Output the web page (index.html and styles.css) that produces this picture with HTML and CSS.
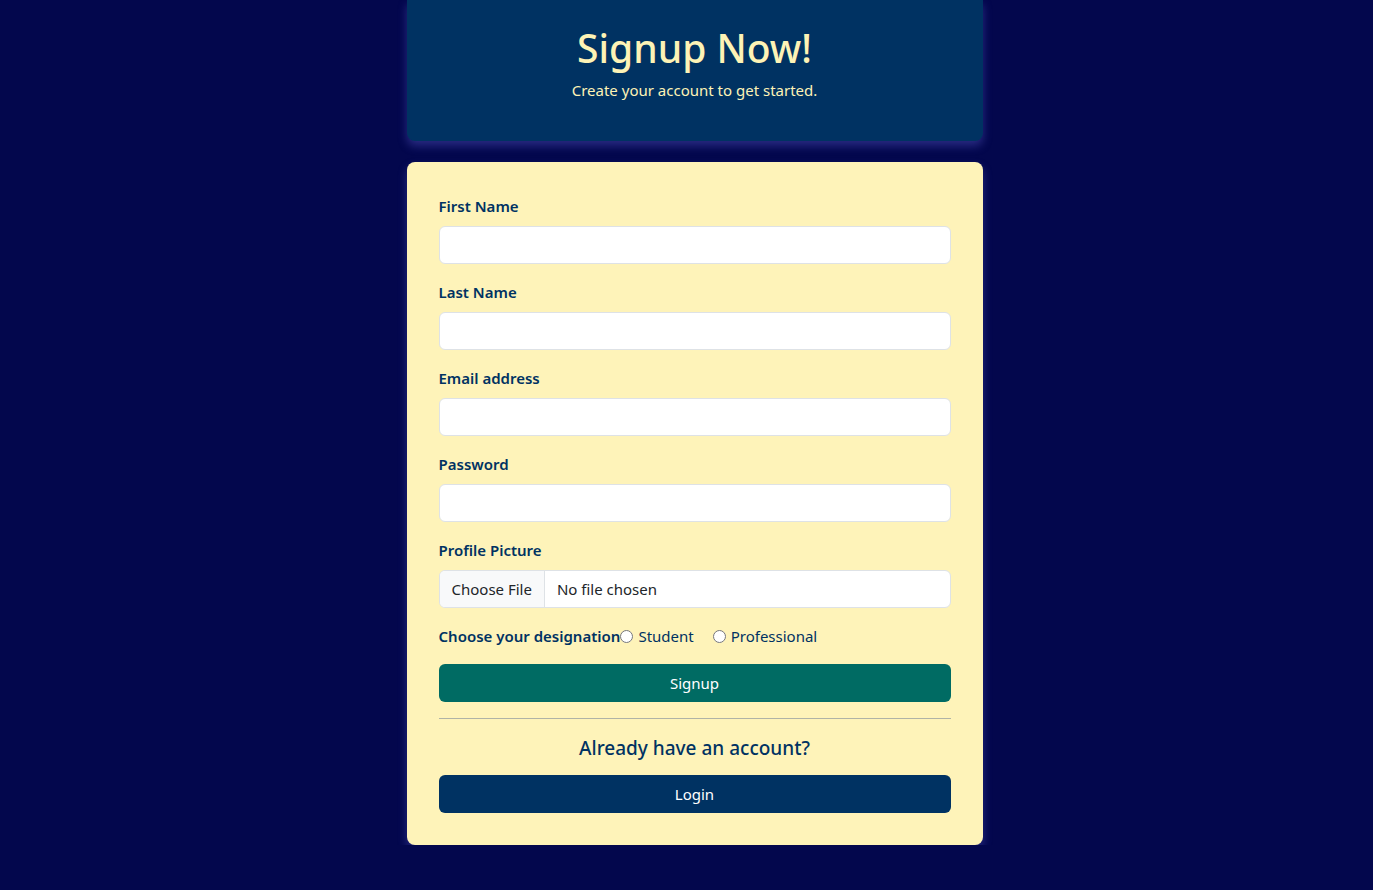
FILE: index.html
```html
<!DOCTYPE html>
<html lang="en">
<head>
<meta charset="utf-8">
<title>Signup</title>
<link rel="stylesheet" href="styles.css">
</head>
<body>
<main class="wrap">
  <header class="hero">
    <h1 class="hero-title">Signup Now!</h1>
    <p class="hero-sub">Create your account to get started.</p>
  </header>
  <form class="card">
    <div class="group">
      <label class="label" for="fn">First Name</label>
      <input class="input" id="fn" type="text">
    </div>
    <div class="group">
      <label class="label" for="ln">Last Name</label>
      <input class="input" id="ln" type="text">
    </div>
    <div class="group">
      <label class="label" for="em">Email address</label>
      <input class="input" id="em" type="email">
    </div>
    <div class="group">
      <label class="label" for="pw">Password</label>
      <input class="input" id="pw" type="password">
    </div>
    <div class="group">
      <label class="label" for="pp">Profile Picture</label>
      <div class="file">
        <span class="file-btn">Choose File</span>
        <span class="file-name">No file chosen</span>
      </div>
    </div>
    <div class="desig">
      <span class="label inline">Choose your designation</span>
      <label class="radio"><input type="radio" name="d"><span>Student</span></label>
      <label class="radio"><input type="radio" name="d"><span>Professional</span></label>
    </div>
    <button type="button" class="btn btn-signup">Signup</button>
    <hr class="rule">
    <h5 class="already">Already have an account?</h5>
    <button type="button" class="btn btn-login">Login</button>
  </form>
</main>
</body>
</html>
```

FILE: styles.css
```css
* { box-sizing: border-box; }
html, body { margin: 0; padding: 0; }
body {
  background: #03074d;
  font-family: "Noto Sans", "Open Sans", sans-serif;
  color: #003262;
  font-size: 16px;
  line-height: 1.5;
  padding-left: 16px;
}
.wrap {
  width: 576px;
  margin: 0 auto;
  display: flex;
  flex-direction: column;
  gap: 21px;
}
.hero {
  background: #003262;
  border-radius: 0 0 8px 8px;
  height: 141px;
  padding-top: 24px;
  text-align: center;
  color: #fdf3b6;
  box-shadow: 0 5px 10px rgba(110, 110, 230, 0.35);
}
.hero-title {
  margin: 0;
  font-size: 39px;
  font-weight: 500;
  line-height: 48px;
}
.hero-sub {
  margin: 6px 0 0;
  font-size: 15px;
  line-height: 24px;
}
.card {
  background: #fef3b9;
  border-radius: 8px;
  padding: 32px;
  display: flex;
  flex-direction: column;
  box-shadow: 0 5px 10px rgba(110, 110, 230, 0.35);
}
.group {
  display: flex;
  flex-direction: column;
  margin-bottom: 16px;
}
.label {
  font-weight: 600;
  font-size: 15px;
  line-height: 24px;
  margin-bottom: 8px;
  color: #003262;
}
.label.inline { margin-bottom: 0; }
.input {
  height: 38px;
  border: 1px solid #dee2e6;
  border-radius: 6px;
  background: #fff;
  font: inherit;
  padding: 6px 12px;
}
.file {
  height: 38px;
  border: 1px solid #dee2e6;
  border-radius: 6px;
  background: #fff;
  display: flex;
  align-items: center;
  overflow: hidden;
  font-size: 15px;
  color: #212529;
}
.file-btn {
  height: 100%;
  display: flex;
  align-items: center;
  padding: 0 12px;
  background: #f8f9fa;
  border-right: 1px solid #dee2e6;
}
.file-name { padding: 0 12px; }
.desig {
  display: flex;
  align-items: center;
  height: 24px;
  margin-bottom: 16px;
}
.radio {
  display: flex;
  align-items: center;
  font-size: 15px;
  margin-right: 19px;
}
.radio input {
  width: 13px;
  height: 13px;
  margin: 0 5px 0 0;
}
.btn {
  height: 38px;
  border: 0;
  border-radius: 6px;
  color: #fff;
  font: inherit;
  font-size: 15px;
  width: 100%;
}
.btn-signup { background: #006b63; }
.btn-login { background: #003262; }
.rule {
  border: 0;
  border-top: 1px solid #b0b3a6;
  margin: 16px 0;
}
.already {
  margin: 0 0 15px;
  text-align: center;
  font-size: 19px;
  font-weight: 500;
  line-height: 24px;
  padding-top: 1px;
}
```
